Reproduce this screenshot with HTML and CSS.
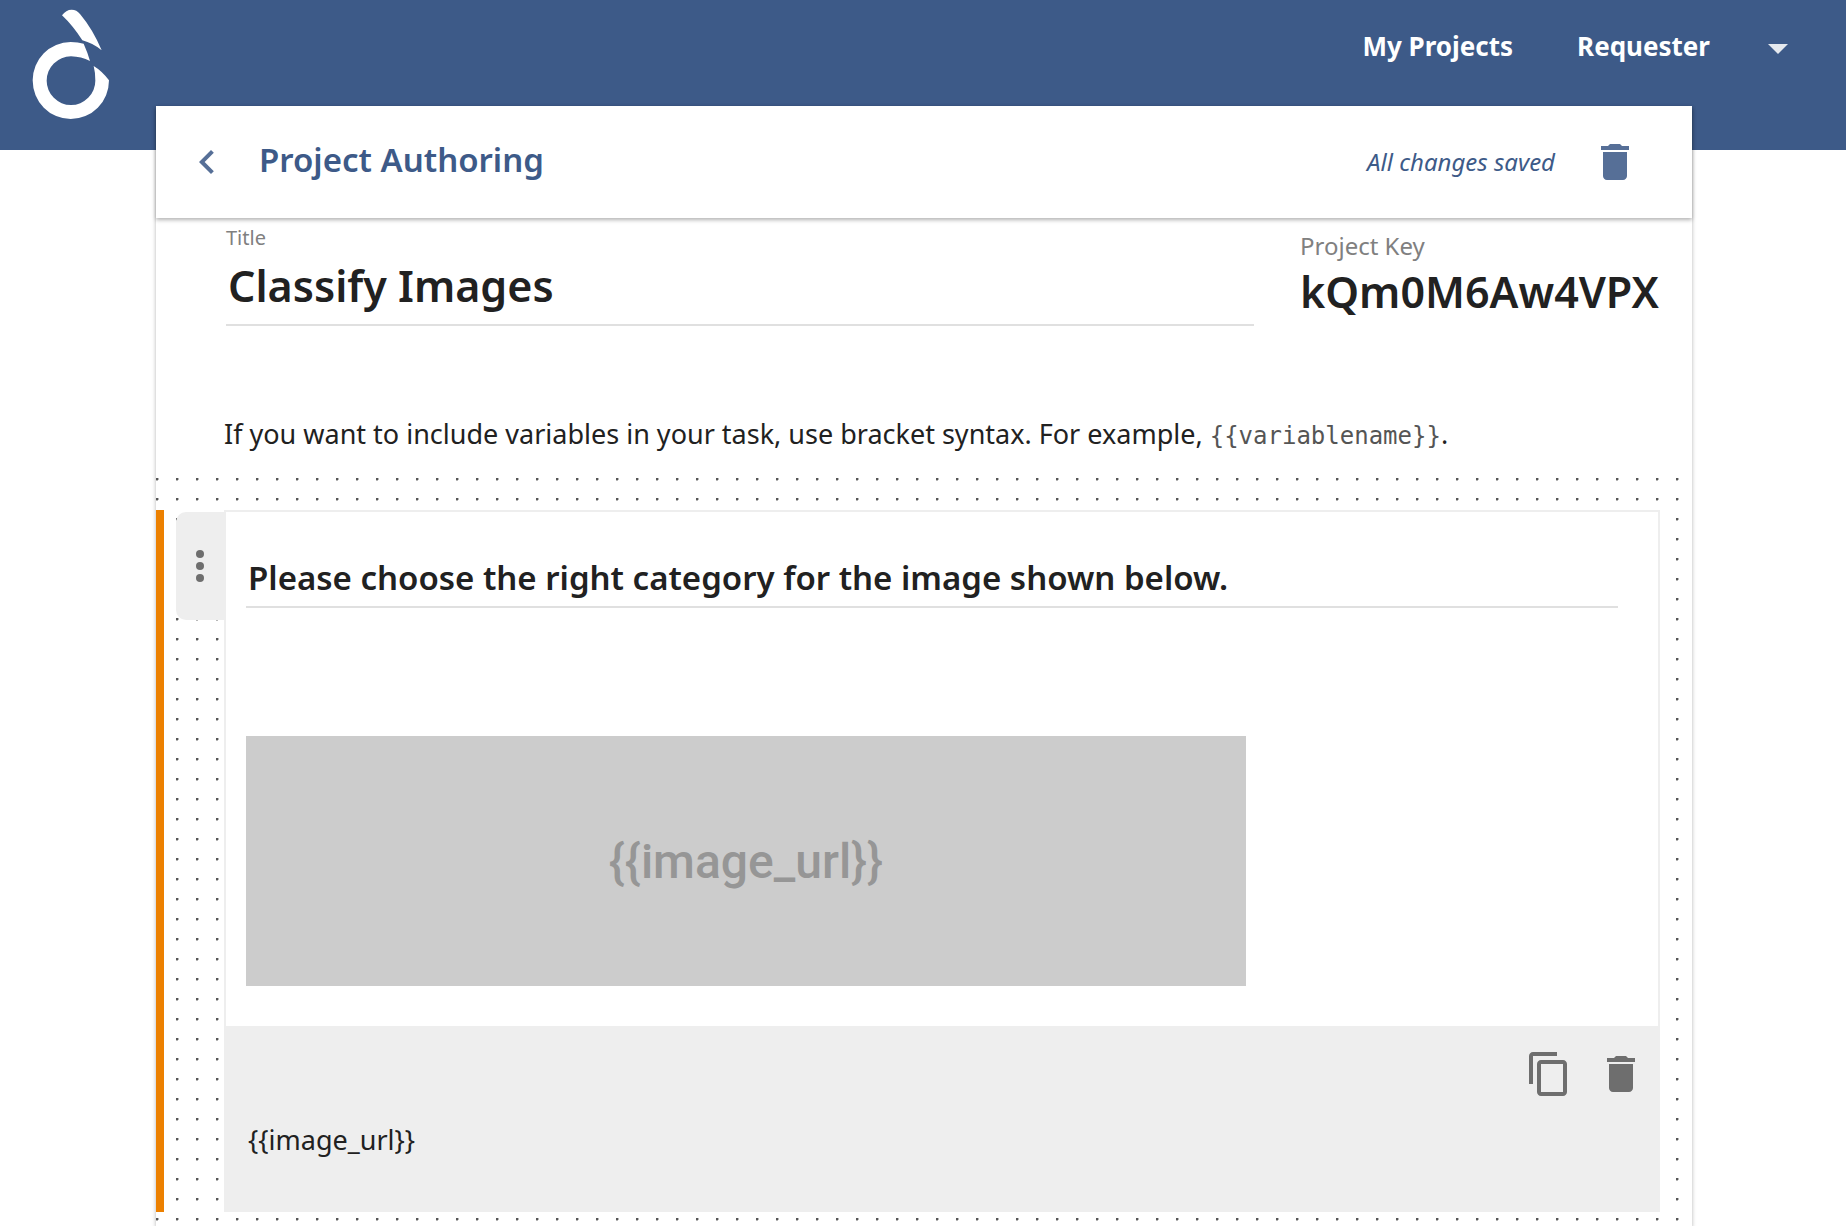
FILE: index.html
```html
<!DOCTYPE html>
<html lang="en">
<head>
<meta charset="utf-8">
<meta name="viewport" content="width=device-width, initial-scale=1">
<title>Project Authoring</title>
<link rel="stylesheet" href="styles.css">
</head>
<body>
<header class="site-header">
  <a class="logo" href="#" aria-label="Home">
    <svg viewBox="0 0 300 390" width="100" height="130" aria-hidden="true">
      <path d="M126 46Q138 29 155 29Q170 29 180 42Q218 87 245 151Q218 129 187 121Q158 76 126 46Z"/>
      <path d="M191 131Q175 126 152 126A114 115 0 0 0 38 241A114 116 0 0 0 152 357A115 116 0 0 0 267 241Q246 213 221 198Q226 217 226 242A73 73 0 0 1 80 242A73 73 0 0 1 153 169Q184 170 210 183Q203 158 191 131Z"/>
    </svg>
  </a>
  <nav class="site-nav">
    <a href="#">My Projects</a>
    <a href="#">Requester</a>
    <button class="icon-button caret" type="button" aria-label="Account menu">
      <svg viewBox="0 0 24 24" width="48" height="48" aria-hidden="true"><path d="M7 10l5 5 5-5z"/></svg>
    </button>
  </nav>
</header>
<main class="sheet">
  <div class="toolbar">
    <button class="icon-button" type="button" aria-label="Back">
      <svg viewBox="0 0 24 24" width="48" height="48" aria-hidden="true"><path d="M15.410 7.410L14 6l-6 6 6 6 1.410-1.410L10.830 12z"/></svg>
    </button>
    <h1>Project Authoring</h1>
    <span class="status">All changes saved</span>
    <button class="icon-button" type="button" aria-label="Delete project">
      <svg viewBox="0 0 24 24" width="48" height="48" aria-hidden="true"><path d="M6 19c0 1.100.900 2 2 2h8c1.100 0 2-.900 2-2V7H6v12zM19 4h-3.500l-1-1h-5l-1 1H5v2h14V4z"/></svg>
    </button>
  </div>
  <div class="details">
    <div class="field">
      <label for="title">Title</label>
      <input id="title" class="title-input" type="text" value="Classify Images">
    </div>
    <div class="key">
      <span class="key-label">Project Key</span>
      <strong class="key-value">kQm0M6Aw4VPX</strong>
    </div>
  </div>
  <p class="hint">If you want to include variables in your task, use bracket syntax. For example, <code>{{variablename}}</code>.</p>
  <div class="canvas">
    <section class="item">
      <button class="handle" type="button" aria-label="Item options">
        <svg viewBox="0 0 24 24" width="48" height="48" aria-hidden="true"><circle cx="12" cy="6" r="2"/><circle cx="12" cy="12" r="2"/><circle cx="12" cy="18" r="2"/></svg>
      </button>
      <div class="item-box">
        <div class="item-body">
          <input class="question" type="text" aria-label="Question" value="Please choose the right category for the image shown below.">
          <div class="placeholder">{{image_url}}</div>
        </div>
        <div class="item-panel">
          <div class="item-actions">
            <button class="icon-button" type="button" aria-label="Duplicate">
              <svg viewBox="0 0 24 24" width="48" height="48" aria-hidden="true"><path d="M16 1H4c-1.100 0-2 .900-2 2v14h2V3h12V1zm3 4H8c-1.100 0-2 .900-2 2v14c0 1.100.900 2 2 2h11c1.100 0 2-.900 2-2V7c0-1.100-.900-2-2-2zm0 16H8V7h11v14z"/></svg>
            </button>
            <button class="icon-button" type="button" aria-label="Delete item">
              <svg viewBox="0 0 24 24" width="48" height="48" aria-hidden="true"><path d="M6 19c0 1.100.900 2 2 2h8c1.100 0 2-.900 2-2V7H6v12zM19 4h-3.500l-1-1h-5l-1 1H5v2h14V4z"/></svg>
            </button>
          </div>
          <input class="source" type="text" aria-label="Image URL" value="{{image_url}}">
        </div>
      </div>
    </section>
  </div>
</main>
</body>
</html>
```

FILE: styles.css
```css
* { box-sizing: border-box; }

body {
  margin: 0;
  min-height: 100vh;
  display: flex;
  flex-direction: column;
  background: #fff;
  color: #212121;
  font: 27px/40px "Noto Sans", "Open Sans", sans-serif;
}

input, button { font: inherit; color: inherit; }
input { display: block; width: 100%; border: 0; background: none; outline: 0; }
svg { display: block; fill: currentColor; }

.icon-button { padding: 0; border: 0; background: none; cursor: pointer; }

.site-header {
  display: flex;
  justify-content: space-between;
  align-items: flex-start;
  height: 150px;
  padding: 0 44px 0 20px;
  background: #3d5a88;
  color: #fff;
}
.site-nav {
  display: flex;
  align-items: center;
  gap: 64px;
  padding-top: 24px;
  font-size: 26px;
  font-weight: 700;
}
.site-nav a { padding-bottom: 4px; }
.logo, .site-nav a { color: inherit; text-decoration: none; }
.caret { margin-left: -20px; opacity: 0.87; }

.sheet {
  flex: 1;
  display: flex;
  flex-direction: column;
  margin: -44px 154px 0 156px;
  background: #fff;
  box-shadow: 0 2px 4px rgba(0, 0, 0, 0.3);
}

.toolbar {
  display: flex;
  align-items: center;
  height: 112px;
  padding: 0 53px 0 27px;
  color: #3d5a88;
  box-shadow: 0 2px 4px rgba(0, 0, 0, 0.3);
}
.toolbar .icon-button { opacity: 0.87; }
.toolbar h1 {
  flex: 1;
  margin: 0 0 0 28px;
  padding-bottom: 4px;
  font-size: 33px;
  font-weight: 600;
}
.status { margin-right: 36px; font-size: 24px; font-style: italic; }

.details {
  display: grid;
  grid-template-columns: 1fr 360px;
  gap: 46px;
  padding: 0 32px 0 70px;
}
.field { padding-top: 4px; }
.field label {
  display: block;
  font-size: 20px;
  line-height: 32px;
  color: #808080;
}
.title-input {
  height: 72px;
  padding: 0 2px 8px;
  border-bottom: 2px solid #e0e0e0;
  font-size: 43px;
  font-weight: 600;
}
.key { display: flex; flex-direction: column; padding-top: 12px; }
.key-label { font-size: 24px; line-height: 32px; color: #808080; }
.key-value { font-size: 43px; line-height: 60px; font-weight: 600; }

.hint { height: 40px; margin: 88px 68px 0; }
.hint code {
  font: 24px "DejaVu Sans Mono", monospace;
  color: #555;
}

.canvas {
  flex: 1;
  margin-top: 24px;
  padding: 32px 0 14px;
  background: radial-gradient(circle at 1px 1px, #555 1px, transparent 2px) 0 0 / 20px 20px;
}
.item {
  display: flex;
  align-items: flex-start;
  padding: 0 32px 0 12px;
  border-left: 8px solid #ec8000;
}
.handle {
  width: 48px;
  height: 108px;
  margin-top: 2px;
  padding: 0;
  border: 0;
  border-radius: 10px 0 0 10px;
  background: #eee;
  color: #6e6e6e;
}
.item-box {
  flex: 1;
  border: 2px solid #eee;
  border-bottom: 0;
  background: #fff;
}
.item-body { padding: 32px 40px 40px 20px; }
.question {
  height: 64px;
  padding: 4px 2px 0;
  border-bottom: 2px solid #e0e0e0;
  font-size: 33px;
  font-weight: 600;
}
.placeholder {
  display: flex;
  align-items: center;
  justify-content: center;
  max-width: 1000px;
  height: 250px;
  margin-top: 128px;
  background: #ccc;
  color: #969696;
  font: 500 48px Roboto, sans-serif;
}
.item-panel { padding: 24px 13px 52px 20px; background: #eee; }
.item-actions {
  display: flex;
  justify-content: flex-end;
  gap: 24px;
  color: #6e6e6e;
}
.source { height: 40px; margin-top: 22px; padding: 0 2px; }
```
